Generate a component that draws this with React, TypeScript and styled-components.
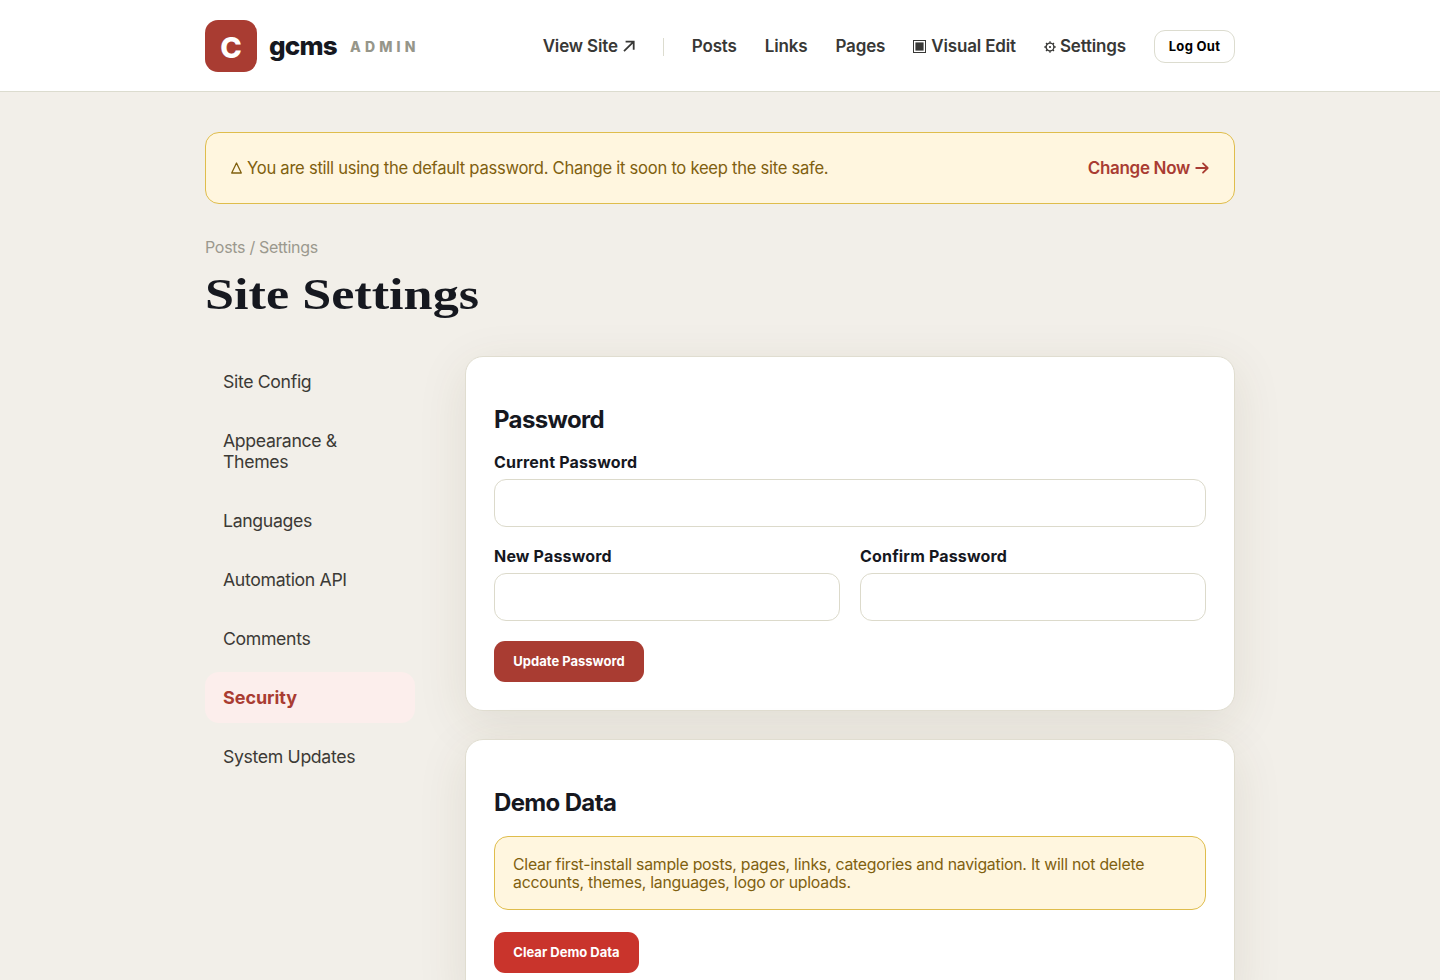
import React from 'react';
import styled, { createGlobalStyle, css } from 'styled-components';

const Global = createGlobalStyle`
  * { box-sizing: border-box; }
  body {
    margin: 0;
    height: 980px;
    overflow: hidden;
    background: #f2efe9;
    color: #16181f;
    font-family: Inter, "Liberation Sans", sans-serif;
    font-size: 17px;
    line-height: 21px;
  }
  h1, h2, p { margin: 0; }
  a { color: inherit; text-decoration: none; }
`;

const Header = styled.header`
  height: 92px;
  background: #fff;
  border-bottom: 1px solid #dcdccf;
`;

const Container = styled.div`
  width: 1030px;
  margin: 0 auto;
`;

const HeaderRow = styled(Container)`
  height: 91px;
  display: flex;
  align-items: center;
  justify-content: space-between;
`;

const Brand = styled.a`
  display: flex;
  align-items: center;
  padding-top: 1px;
`;

const Mark = styled.span`
  width: 52px;
  height: 52px;
  border-radius: 13px;
  background: #a93c32;
  color: #fff;
  display: flex;
  align-items: center;
  justify-content: center;
  padding-top: 2px;
  font-size: 29px;
  font-weight: 800;
`;

const BrandName = styled.span`
  margin-left: 12px;
  font-size: 26px;
  font-weight: 800;
  letter-spacing: -0.8px;
  line-height: 30px;
`;

const BrandTag = styled.span`
  margin-left: 13px;
  color: #96968a;
  font-size: 14px;
  font-weight: 800;
  letter-spacing: 4.2px;
`;

const Nav = styled.nav`
  display: flex;
  align-items: center;
  gap: 28px;
  padding-top: 2px;
`;

const NavLink = styled.a`
  display: flex;
  align-items: center;
  color: #383836;
  font-size: 17px;
  font-weight: 600;
  letter-spacing: -0.16px;
  white-space: nowrap;
  svg { flex: none; }
`;

const Divider = styled.span`
  width: 1px;
  height: 18px;
  background: #dcdccf;
`;

const LogoutButton = styled.button`
  width: 81px;
  height: 33px;
  padding: 0 0 1px;
  border: 1px solid #dcdccf;
  border-radius: 11px;
  background: #fff;
  color: #000;
  font: 700 13px Inter, sans-serif;
  letter-spacing: 0.3px;
`;

const noticeBox = css`
  background: #fff6df;
  border: 1px solid #dfbd4c;
  border-radius: 14px;
  color: #80600f;
`;

const Banner = styled.div`
  ${noticeBox}
  margin-top: 40px;
  height: 72px;
  padding: 0 25px;
  display: flex;
  align-items: center;
  justify-content: space-between;
`;

const BannerText = styled.p`
  display: flex;
  align-items: center;
  font-size: 16.6px;
  letter-spacing: -0.27px;
`;

const BannerLink = styled.a`
  display: flex;
  align-items: center;
  color: #a93c32;
  font-weight: 600;
  letter-spacing: -0.3px;
`;

const Crumbs = styled.p`
  margin-top: 33px;
  color: #9b998e;
  font-size: 16px;
  letter-spacing: -0.3px;
`;

const Title = styled.h1`
  margin-top: 11px;
  height: 51px;
  font-family: "Liberation Serif", serif;
  font-size: 45px;
  line-height: 50px;
  font-weight: 700;
  transform: scaleX(1.16);
  transform-origin: left;
`;

const Columns = styled.div`
  margin-top: 36px;
  display: grid;
  grid-template-columns: 210px 770px;
  gap: 50px;
  align-items: start;
`;

const SideNav = styled.nav`
  display: flex;
  flex-direction: column;
  gap: 8px;
`;

const SideLink = styled.a<{ $active?: boolean }>`
  padding: 15px 18px;
  border-radius: 14px;
  font-size: ${p => (p.$active ? 18 : 17.7)}px;
  line-height: 21px;
  letter-spacing: ${p => (p.$active ? -0.05 : -0.35)}px;
  color: ${p => (p.$active ? '#a93c32' : '#3c3a36')};
  background: ${p => (p.$active ? '#fceeec' : 'transparent')};
  font-weight: ${p => (p.$active ? 700 : 400)};
`;

const Cards = styled.div`
  display: flex;
  flex-direction: column;
  gap: 28px;
`;

const Card = styled.section`
  padding: 49px 28px 28px;
  border: 1px solid #e0ddd0;
  border-radius: 18px;
  background: #fff;
  box-shadow: 0 12px 50px rgba(76, 72, 30, 0.1);
`;

const CardTitle = styled.h2`
  font-size: 24px;
  line-height: 28px;
  font-weight: 700;
  letter-spacing: -0.65px;
  margin-bottom: 19px;
`;

const FieldGrid = styled.div`
  display: grid;
  grid-template-columns: 1fr 1fr;
  gap: 20px;
  margin-bottom: 20px;
`;

const Field = styled.label<{ $wide?: boolean }>`
  display: flex;
  flex-direction: column;
  gap: 8px;
  grid-column: ${p => (p.$wide ? '1 / -1' : 'auto')};
  font-size: 16px;
  line-height: 18px;
  font-weight: 750;
  letter-spacing: 0.18px;
`;

const Input = styled.input`
  width: 100%;
  height: 48px;
  padding: 0 14px;
  border: 1px solid #dcdacb;
  border-radius: 12px;
  background: #fff;
  font: inherit;
`;

const Button = styled.button<{ $danger?: boolean }>`
  display: block;
  height: 41px;
  width: ${p => (p.$danger ? 145 : 150)}px;
  padding: 0 0 1px;
  border: 0;
  border-radius: 11px;
  background: ${p => (p.$danger ? '#c9342c' : '#a93c32')};
  color: #fff;
  font: 700 13px Inter, sans-serif;
  letter-spacing: 0;
`;

const Notice = styled.p`
  ${noticeBox}
  height: 74px;
  padding: 19px 18px 17px;
  margin-bottom: 22px;
  font-size: 15.8px;
  line-height: 18px;
  letter-spacing: -0.235px;
`;

const ArrowUpRight = () => (
  <svg width="12" height="13" viewBox="0 0 12 13" fill="none" stroke="currentColor" strokeWidth="1.8" style={{ marginLeft: 5 }}>
    <path d="M1 11.2 10.4 1.9M2.6 1.7H10.7V9.8" />
  </svg>
);

const SquareIcon = () => (
  <svg width="13" height="13" viewBox="0 0 13 13" fill="none" style={{ marginRight: 5 }}>
    <rect x=".5" y=".5" width="12" height="12" stroke="currentColor" />
    <rect x="2.4" y="2.4" width="8.2" height="8.2" fill="currentColor" />
  </svg>
);

const GearIcon = () => (
  <svg width="12" height="12" viewBox="0 0 12 12" fill="none" stroke="currentColor" style={{ marginRight: 4 }}>
    <circle cx="6" cy="6" r="3.9" strokeWidth="1.4" />
    <circle cx="6" cy="6" r="1.1" fill="currentColor" stroke="none" />
    <path strokeWidth="1.3" d="M6 2V.3M6 10v1.7M2 6H.3M10 6h1.7M3.2 3.2 2 2M8.8 3.2 10 2M3.2 8.8 2 10M8.8 8.8 10 10" />
  </svg>
);

const TriangleIcon = () => (
  <svg width="11" height="12" viewBox="0 0 11 12" fill="none" stroke="currentColor" strokeWidth="1.3" style={{ marginRight: 5 }}>
    <path d="M5.5 1 10.3 11H.7Z" strokeLinejoin="round" />
  </svg>
);

const ArrowRight = () => (
  <svg width="14" height="12" viewBox="0 0 14 12" fill="none" stroke="currentColor" strokeWidth="1.8" strokeLinecap="round" strokeLinejoin="round" style={{ marginLeft: 5 }}>
    <path d="M1.2 6H12.6M8 1.4 12.7 6 8 10.6" />
  </svg>
);

const sections = ['Site Config', 'Appearance & Themes', 'Languages', 'Automation API', 'Comments', 'Security', 'System Updates'];

export default function App() {
  return (
    <>
      <Global />
      <Header>
        <HeaderRow>
          <Brand>
            <Mark>C</Mark>
            <BrandName>gcms</BrandName>
            <BrandTag>ADMIN</BrandTag>
          </Brand>
          <Nav>
            <NavLink>View Site<ArrowUpRight /></NavLink>
            <Divider />
            <NavLink>Posts</NavLink>
            <NavLink>Links</NavLink>
            <NavLink>Pages</NavLink>
            <NavLink><SquareIcon />Visual Edit</NavLink>
            <NavLink><GearIcon />Settings</NavLink>
            <LogoutButton>Log Out</LogoutButton>
          </Nav>
        </HeaderRow>
      </Header>
      <Container as="main">
        <Banner>
          <BannerText><TriangleIcon />You are still using the default password. Change it soon to keep the site safe.</BannerText>
          <BannerLink>Change Now<ArrowRight /></BannerLink>
        </Banner>
        <Crumbs>Posts / Settings</Crumbs>
        <Title>Site Settings</Title>
        <Columns>
          <SideNav>
            {sections.map(name => (
              <SideLink key={name} $active={name === 'Security'}>{name}</SideLink>
            ))}
          </SideNav>
          <Cards>
            <Card>
              <CardTitle>Password</CardTitle>
              <FieldGrid>
                <Field $wide>Current Password<Input type="password" /></Field>
                <Field>New Password<Input type="password" /></Field>
                <Field>Confirm Password<Input type="password" /></Field>
              </FieldGrid>
              <Button>Update Password</Button>
            </Card>
            <Card>
              <CardTitle>Demo Data</CardTitle>
              <Notice>Clear first-install sample posts, pages, links, categories and navigation. It will not delete accounts, themes, languages, logo or uploads.</Notice>
              <Button $danger>Clear Demo Data</Button>
            </Card>
          </Cards>
        </Columns>
      </Container>
    </>
  );
}
